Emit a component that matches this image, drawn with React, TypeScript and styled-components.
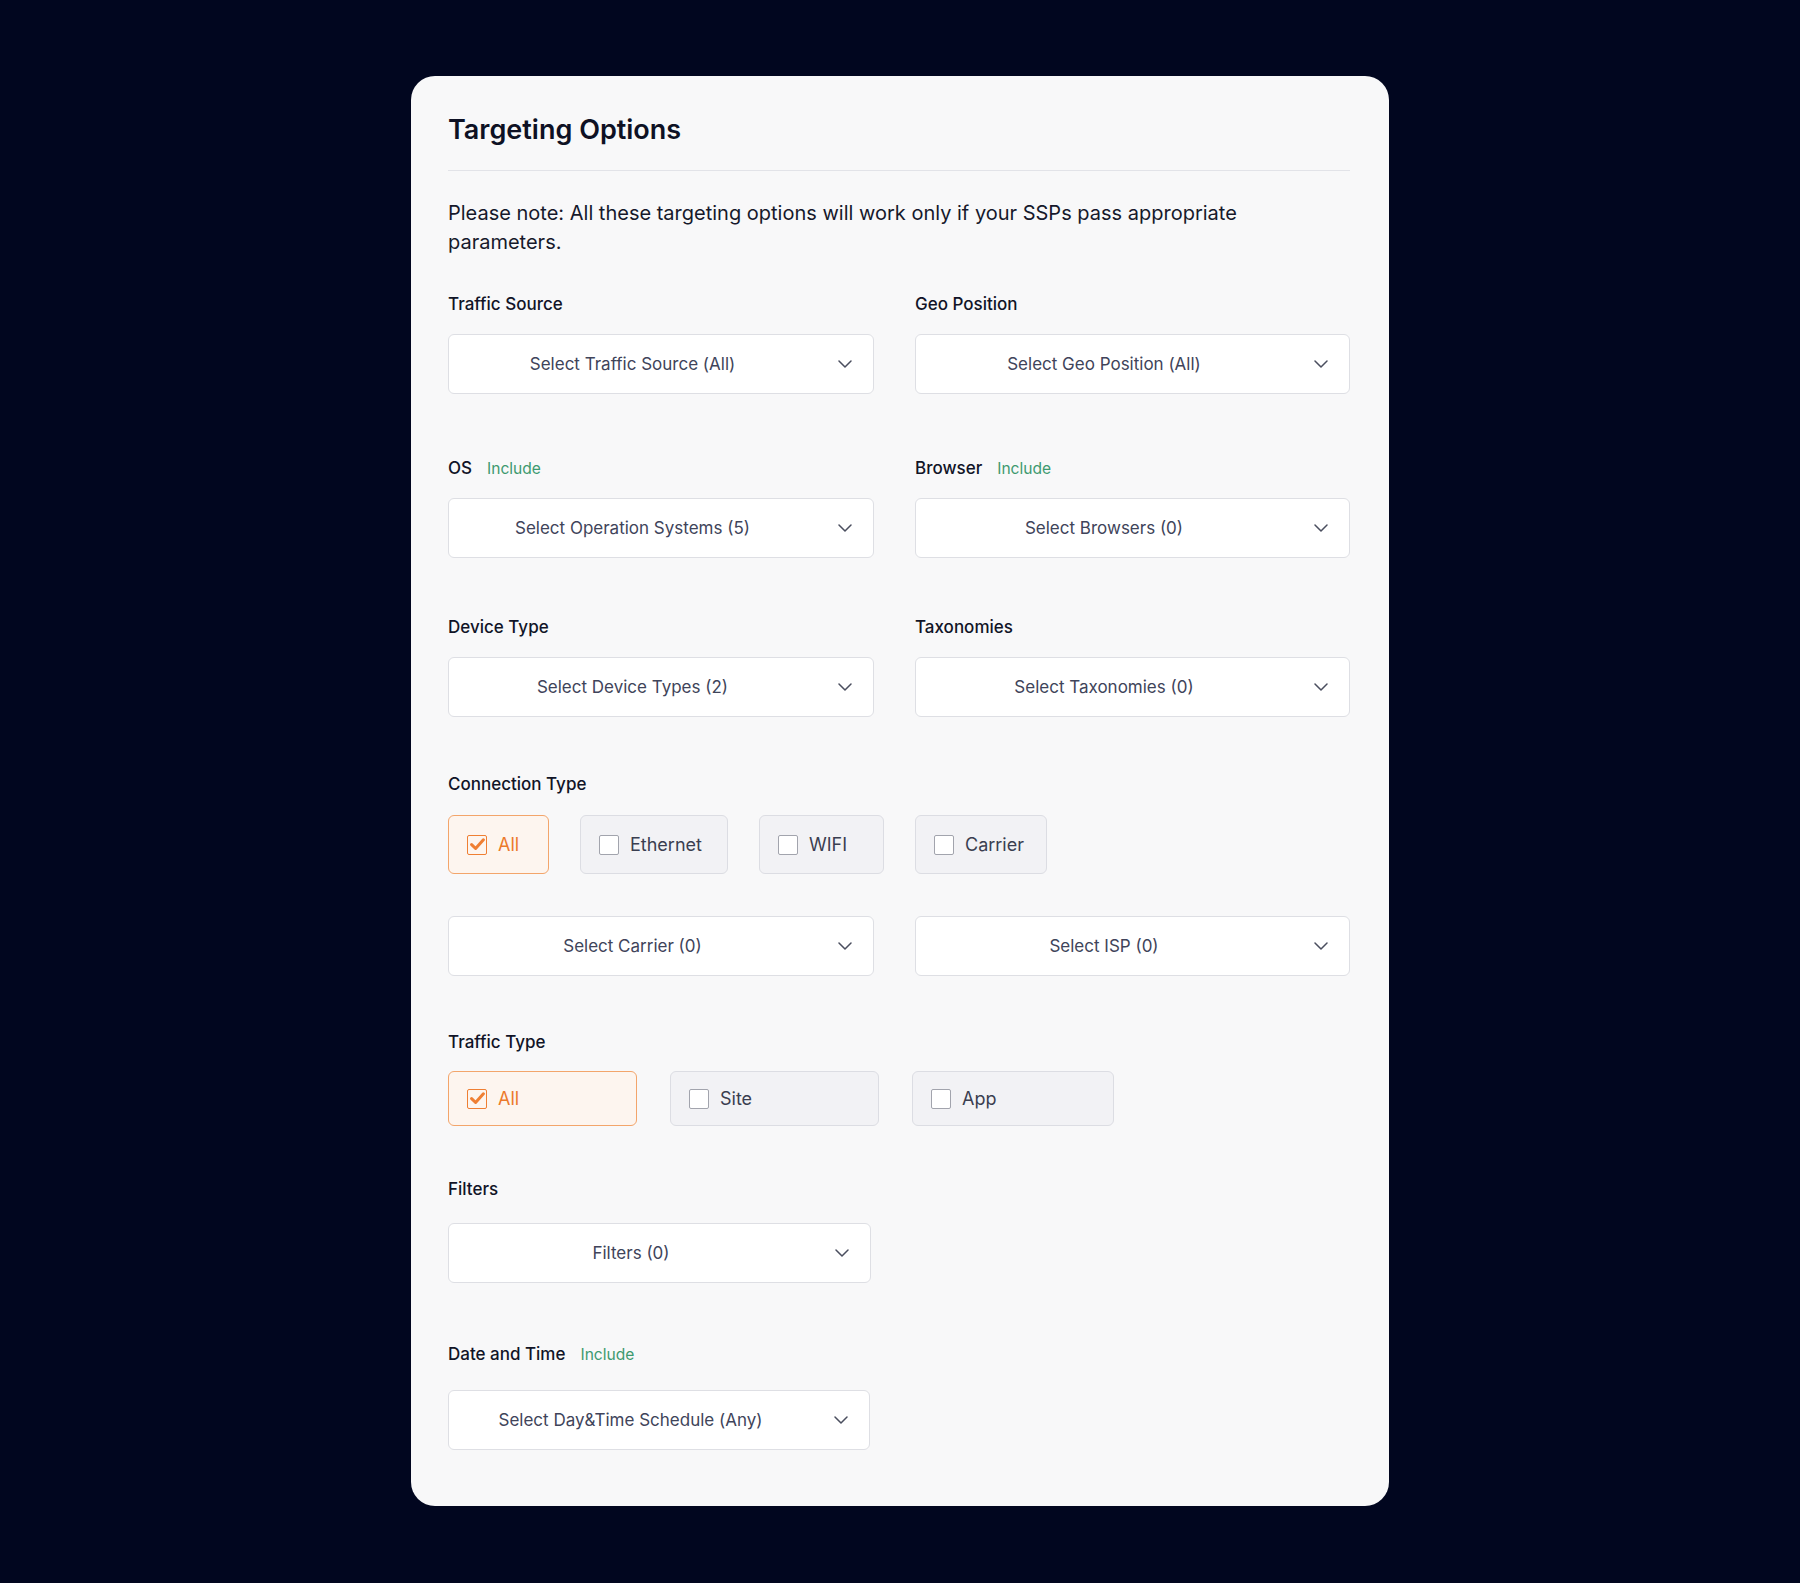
import React from 'react';
import styled, { createGlobalStyle } from 'styled-components';

const GlobalStyle = createGlobalStyle`
  html, body { margin: 0; padding: 0; background: #01061f; }
  body { font-family: Inter, "Noto Sans", "Liberation Sans", sans-serif; -webkit-font-smoothing: antialiased; }
  * { box-sizing: border-box; }
`;

const Page = styled.div`
  min-height: 1583px;
  background: #01061f;
  padding-top: 76px;
  display: flex;
  justify-content: center;
  align-items: flex-start;
`;

const Card = styled.div`
  width: 978px;
  background: #f8f8f9;
  border-radius: 24px;
  padding: 38px 39px 56px 37px;
  display: flex;
  flex-direction: column;
`;

const Title = styled.h1`
  margin: 0;
  font-size: 27px;
  line-height: 32px;
  font-weight: 600;
  color: #0e1124;
  padding-bottom: 24px;
  border-bottom: 1px solid #e2e3e8;
`;

const Note = styled.p`
  margin: 28px 0 0;
  max-width: 830px;
  font-size: 20px;
  line-height: 29px;
  color: #16192b;
  font-weight: 400;
`;

const Section = styled.div<{ $mt: number }>`
  margin-top: ${(p) => p.$mt}px;
`;

const Row = styled.div<{ $mt: number }>`
  margin-top: ${(p) => p.$mt}px;
  display: grid;
  grid-template-columns: 426px 435px;
  column-gap: 41px;
`;

const Label = styled.div<{ $mb: number }>`
  display: flex;
  align-items: center;
  gap: 15px;
  height: 20px;
  font-size: 17px;
  font-weight: 500;
  color: #111427;
  margin-bottom: ${(p) => p.$mb}px;
  white-space: nowrap;
`;

const Include = styled.span`
  font-size: 15.6px;
  font-weight: 400;
  color: #3e9a70;
`;

const SelectBox = styled.button<{ $w?: number }>`
  width: ${(p) => (p.$w ? `${p.$w}px` : '100%')};
  height: 60px;
  background: #ffffff;
  border: 1px solid #dedfe4;
  border-radius: 6px;
  display: flex;
  align-items: center;
  padding: 0 21px 0 0;
  gap: 22px;
  font-family: inherit;
  font-size: 17px;
  font-weight: 400;
  color: #40445a;
  cursor: pointer;
`;

const SelectText = styled.span`
  flex: 1;
  text-align: center;
`;

const ChevronIcon = styled.svg`
  width: 14px;
  height: 8px;
  flex: none;
`;

const OptionRow = styled.div<{ $gap: number }>`
  display: flex;
  gap: ${(p) => p.$gap}px;
`;

const Option = styled.label<{ $checked: boolean; $w: number; $h: number }>`
  width: ${(p) => p.$w}px;
  height: ${(p) => p.$h}px;
  display: flex;
  align-items: center;
  gap: 11px;
  padding: 0 0 0 18px;
  border: 1px solid ${(p) => (p.$checked ? '#f3a56b' : '#dcdde3')};
  background: ${(p) => (p.$checked ? '#fdf5ef' : '#f2f2f5')};
  border-radius: 6px;
  font-size: 18px;
  color: ${(p) => (p.$checked ? '#ec7a2c' : '#3a3e50')};
  cursor: pointer;
`;

const Box = styled.span<{ $checked: boolean }>`
  width: 20px;
  height: 20px;
  flex: none;
  border: 1.5px solid ${(p) => (p.$checked ? '#ef7f33' : '#a2a4ad')};
  background: ${(p) => (p.$checked ? 'transparent' : '#ffffff')};
  border-radius: 2px;
  display: flex;
  align-items: center;
  justify-content: center;
`;

const Chevron = () => (
  <ChevronIcon viewBox="0 0 14 8" fill="none">
    <path d="M1 1l6 6 6-6" stroke="#4a4e5e" strokeWidth="1.5" strokeLinecap="round" strokeLinejoin="round" />
  </ChevronIcon>
);

const Select = ({ text, w }: { text: string; w?: number }) => (
  <SelectBox $w={w} type="button">
    <SelectText>{text}</SelectText>
    <Chevron />
  </SelectBox>
);

const Check = ({ checked }: { checked: boolean }) => (
  <Box $checked={checked}>
    {checked && (
      <svg width="15" height="13" viewBox="0 0 15 13" fill="none">
        <path d="M1.6 6.6l4 3.9L13.4 1.8" stroke="#ef7f33" strokeWidth="3" strokeLinecap="round" strokeLinejoin="round" />
      </svg>
    )}
  </Box>
);

type Opt = { label: string; checked: boolean; w: number };

const Options = ({ items, h, gap }: { items: Opt[]; h: number; gap: number }) => (
  <OptionRow $gap={gap}>
    {items.map((o) => (
      <Option key={o.label} $checked={o.checked} $w={o.w} $h={h}>
        <Check checked={o.checked} />
        {o.label}
      </Option>
    ))}
  </OptionRow>
);

const Field = ({ label, include, text, mb = 20, w }: { label: string; include?: boolean; text: string; mb?: number; w?: number }) => (
  <div>
    <Label $mb={mb}>
      {label}
      {include && <Include>Include</Include>}
    </Label>
    <Select text={text} w={w} />
  </div>
);

export default function App() {
  return (
    <Page>
      <GlobalStyle />
      <Card>
        <Title>Targeting Options</Title>
        <Note>
          Please note: All these targeting options will work only if your SSPs pass appropriate parameters.
        </Note>

        <Row $mt={37}>
          <Field label="Traffic Source" text="Select Traffic Source (All)" />
          <Field label="Geo Position" text="Select Geo Position (All)" />
        </Row>

        <Row $mt={64}>
          <Field label="OS" include text="Select Operation Systems (5)" />
          <Field label="Browser" include text="Select Browsers (0)" />
        </Row>

        <Row $mt={59}>
          <Field label="Device Type" text="Select Device Types (2)" />
          <Field label="Taxonomies" text="Select Taxonomies (0)" />
        </Row>

        <Section $mt={57}>
          <Label $mb={21}>Connection Type</Label>
          <Options
            h={59}
            gap={31}
            items={[
              { label: 'All', checked: true, w: 101 },
              { label: 'Ethernet', checked: false, w: 148 },
              { label: 'WIFI', checked: false, w: 125 },
              { label: 'Carrier', checked: false, w: 132 },
            ]}
          />
        </Section>

        <Row $mt={42}>
          <Select text="Select Carrier (0)" />
          <Select text="Select ISP (0)" />
        </Row>

        <Section $mt={56}>
          <Label $mb={19}>Traffic Type</Label>
          <Options
            h={55}
            gap={33}
            items={[
              { label: 'All', checked: true, w: 189 },
              { label: 'Site', checked: false, w: 209 },
              { label: 'App', checked: false, w: 202 },
            ]}
          />
        </Section>

        <Section $mt={53}>
          <Field label="Filters" text="Filters (0)" mb={24} w={423} />
        </Section>

        <Section $mt={61}>
          <Field label="Date and Time" include text="Select Day&Time Schedule (Any)" mb={26} w={422} />
        </Section>
      </Card>
    </Page>
  );
}
